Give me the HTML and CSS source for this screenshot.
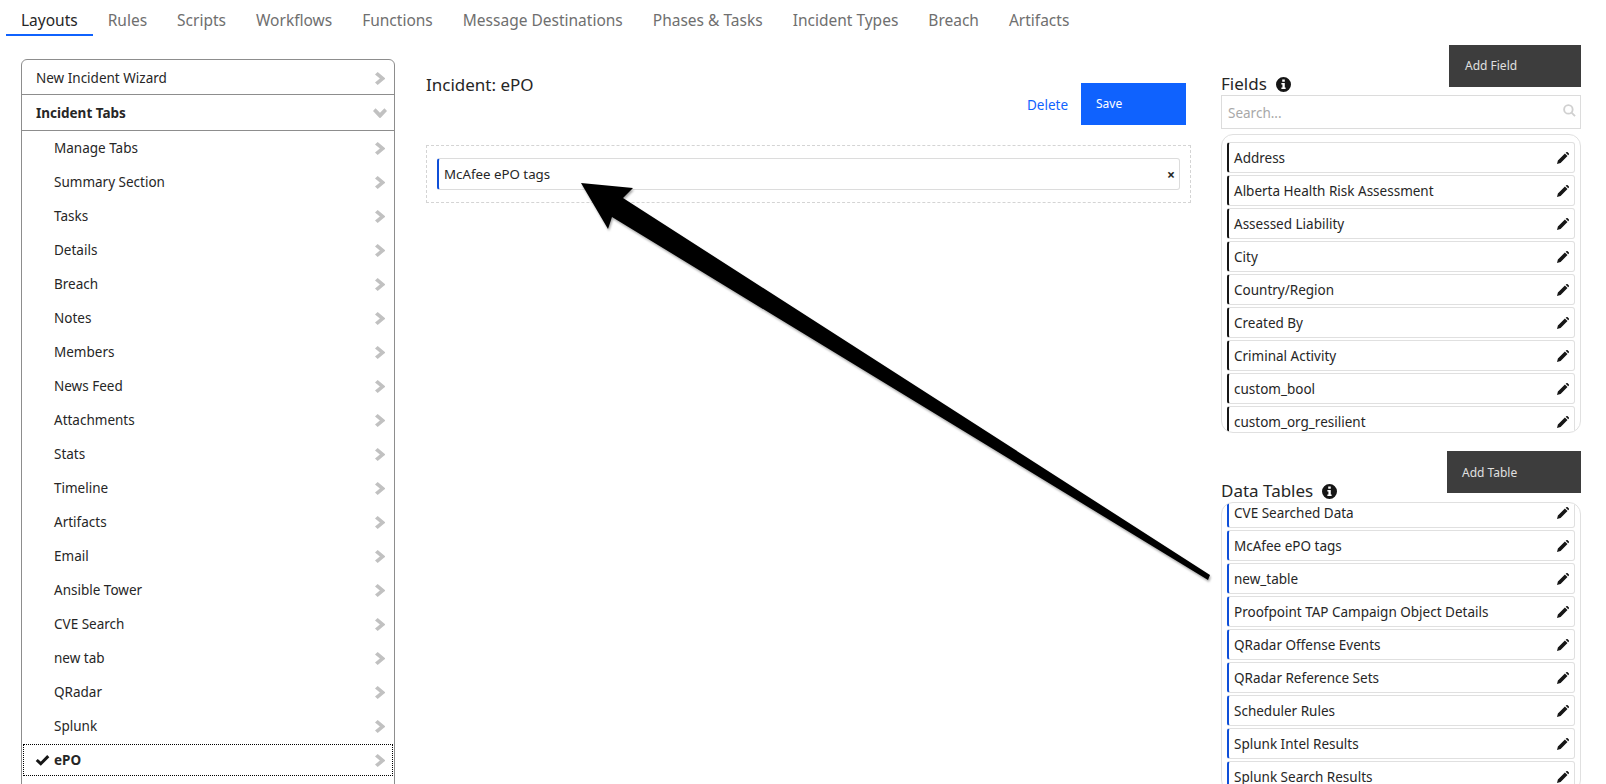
FILE: index.html
```html
<!DOCTYPE html>
<html lang="en">
<head>
  <meta charset="UTF-8">
  <meta name="viewport" content="width=device-width, initial-scale=1.0">
  <title>Customization Settings</title>
  <link rel="stylesheet" href="styles.css">
</head>
<body>
  <svg class="defs" width="0" height="0">
    <symbol id="i-right" viewBox="0 0 9 12" preserveAspectRatio="none"><path d="M2.4 0 8.6 5.2a1 1 0 0 1 0 1.6L2.4 12 0 9.8 4.4 6 0 2.2Z"/></symbol>
    <symbol id="i-down" viewBox="0 0 12 8"><path d="M0 2.2 5.2 7.8a1 1 0 0 0 1.6 0L12 2.2 9.8 0 6 3.8 2.2 0Z"/></symbol>
    <symbol id="i-pencil" viewBox="0 0 12 12"><path d="M0 12 .9 8.4 7.9 1.5 10.5 4.1 3.6 11.1ZM8.7.8 9.3.3a1 1 0 0 1 1.4 0l1 1a1 1 0 0 1 0 1.4l-.5.6Z"/></symbol>
    <symbol id="i-info" viewBox="0 0 14 14"><path fill-rule="evenodd" d="M7 0a7 7 0 1 1 0 14A7 7 0 0 1 7 0ZM5.8 2.4v2.1h2.4V2.4ZM5 5.7v1.4h1v2.6H5v1.6h4V9.7H8.2V5.7Z"/></symbol>
  </svg>

  <nav class="tabs">
    <a class="tab active">Layouts</a>
    <a class="tab">Rules</a>
    <a class="tab">Scripts</a>
    <a class="tab">Workflows</a>
    <a class="tab">Functions</a>
    <a class="tab">Message Destinations</a>
    <a class="tab">Phases &amp; Tasks</a>
    <a class="tab">Incident Types</a>
    <a class="tab">Breach</a>
    <a class="tab">Artifacts</a>
  </nav>

  <main class="page">
    <aside class="menu">
      <div class="menu-head first">New Incident Wizard <svg class="chev"><use href="#i-right"/></svg></div>
      <div class="menu-head open"><b>Incident Tabs</b> <svg class="chev-down"><use href="#i-down"/></svg></div>
      <div class="menu-item">Manage Tabs <svg class="chev"><use href="#i-right"/></svg></div>
      <div class="menu-item">Summary Section <svg class="chev"><use href="#i-right"/></svg></div>
      <div class="menu-item">Tasks <svg class="chev"><use href="#i-right"/></svg></div>
      <div class="menu-item">Details <svg class="chev"><use href="#i-right"/></svg></div>
      <div class="menu-item">Breach <svg class="chev"><use href="#i-right"/></svg></div>
      <div class="menu-item">Notes <svg class="chev"><use href="#i-right"/></svg></div>
      <div class="menu-item">Members <svg class="chev"><use href="#i-right"/></svg></div>
      <div class="menu-item">News Feed <svg class="chev"><use href="#i-right"/></svg></div>
      <div class="menu-item">Attachments <svg class="chev"><use href="#i-right"/></svg></div>
      <div class="menu-item">Stats <svg class="chev"><use href="#i-right"/></svg></div>
      <div class="menu-item">Timeline <svg class="chev"><use href="#i-right"/></svg></div>
      <div class="menu-item">Artifacts <svg class="chev"><use href="#i-right"/></svg></div>
      <div class="menu-item">Email <svg class="chev"><use href="#i-right"/></svg></div>
      <div class="menu-item">Ansible Tower <svg class="chev"><use href="#i-right"/></svg></div>
      <div class="menu-item">CVE Search <svg class="chev"><use href="#i-right"/></svg></div>
      <div class="menu-item">new tab <svg class="chev"><use href="#i-right"/></svg></div>
      <div class="menu-item">QRadar <svg class="chev"><use href="#i-right"/></svg></div>
      <div class="menu-item">Splunk <svg class="chev"><use href="#i-right"/></svg></div>
      <div class="menu-item selected">
        <svg class="check" viewBox="0 0 13 10"><path d="M1.5 5 5 8.2 11.5 1.6"/></svg>
        <b>ePO</b> <svg class="chev"><use href="#i-right"/></svg>
      </div>
    </aside>

    <section class="editor">
      <div class="editor-head">
        <h2 class="editor-title">Incident: ePO</h2>
        <div class="editor-actions">
          <a class="link-delete">Delete</a>
          <button class="btn-save">Save</button>
        </div>
      </div>
      <div class="dropzone">
        <div class="block">McAfee ePO tags <span class="block-close">×</span></div>
      </div>
    </section>

    <aside class="side">
      <div class="side-head">
        <h3 class="side-title">Fields <svg class="info"><use href="#i-info"/></svg></h3>
        <button class="btn-add">Add Field</button>
      </div>
      <div class="search">
        <span>Search...</span>
        <svg class="search-icon" viewBox="0 0 14 14"><circle cx="5.8" cy="5.8" r="4.6"/><path d="M9.2 9.2 13 13"/></svg>
      </div>
      <div class="rows fields">
        <div class="row">Address <svg class="pencil"><use href="#i-pencil"/></svg></div>
        <div class="row">Alberta Health Risk Assessment <svg class="pencil"><use href="#i-pencil"/></svg></div>
        <div class="row">Assessed Liability <svg class="pencil"><use href="#i-pencil"/></svg></div>
        <div class="row">City <svg class="pencil"><use href="#i-pencil"/></svg></div>
        <div class="row">Country/Region <svg class="pencil"><use href="#i-pencil"/></svg></div>
        <div class="row">Created By <svg class="pencil"><use href="#i-pencil"/></svg></div>
        <div class="row">Criminal Activity <svg class="pencil"><use href="#i-pencil"/></svg></div>
        <div class="row">custom_bool <svg class="pencil"><use href="#i-pencil"/></svg></div>
        <div class="row">custom_org_resilient <svg class="pencil"><use href="#i-pencil"/></svg></div>
      </div>

      <div class="side-head tables-head">
        <h3 class="side-title">Data Tables <svg class="info"><use href="#i-info"/></svg></h3>
        <button class="btn-add wide">Add Table</button>
      </div>
      <div class="rows tables">
        <div class="row">CVE Searched Data <svg class="pencil"><use href="#i-pencil"/></svg></div>
        <div class="row">McAfee ePO tags <svg class="pencil"><use href="#i-pencil"/></svg></div>
        <div class="row">new_table <svg class="pencil"><use href="#i-pencil"/></svg></div>
        <div class="row">Proofpoint TAP Campaign Object Details <svg class="pencil"><use href="#i-pencil"/></svg></div>
        <div class="row">QRadar Offense Events <svg class="pencil"><use href="#i-pencil"/></svg></div>
        <div class="row">QRadar Reference Sets <svg class="pencil"><use href="#i-pencil"/></svg></div>
        <div class="row">Scheduler Rules <svg class="pencil"><use href="#i-pencil"/></svg></div>
        <div class="row">Splunk Intel Results <svg class="pencil"><use href="#i-pencil"/></svg></div>
        <div class="row">Splunk Search Results <svg class="pencil"><use href="#i-pencil"/></svg></div>
      </div>
    </aside>
  </main>

  <!-- annotation drawn on top of the screenshot -->
  <svg class="arrow" viewBox="0 0 1606 784">
    <path d="M581 183 633 188 623 198 1210 575 1208 580 612 217 608 229Z"/>
  </svg>
</body>
</html>
```

FILE: styles.css
```css
html, body {
  height: 784px;
}

body {
  font-family: 'Noto Sans', sans-serif;
  font-size: 13.5px;
  color: #262626;
  background-color: #fff;
  margin: 0;
  overflow: hidden;
  position: relative;
}

.defs {
  position: absolute;
}

/* top tabs */
.tabs {
  display: flex;
  height: 36px;
  margin-left: 6px;
}

.tab {
  padding: 10px 15px 0;
  font-size: 15.5px;
  line-height: 20px;
  color: #6f6f6f;
  box-sizing: border-box;
  white-space: nowrap;
}

.tab.active {
  color: #262626;
  border-bottom: 2px solid #0f62fe;
}

.page {
  display: flex;
  align-items: flex-start;
  height: 748px;
  padding-left: 21px;
}

/* left menu */
.menu {
  width: 374px;
  height: 760px;
  margin-top: 23px;
  box-sizing: border-box;
  border: 1px solid #8d8d8d;
  border-radius: 6px;
  flex-shrink: 0;
}

.menu-head {
  display: flex;
  align-items: center;
  justify-content: space-between;
  height: 35px;
  padding: 0 9px 0 14px;
  box-sizing: border-box;
  border-bottom: 1px solid #8d8d8d;
}

.menu-head.first {
  padding-top: 2px;
}

.menu-head.open {
  height: 36px;
}

.menu-item {
  display: flex;
  align-items: center;
  justify-content: space-between;
  height: 34px;
  padding: 0 9px 0 32px;
  box-sizing: border-box;
  position: relative;
}

.menu-item.selected {
  outline: 1px dotted #000;
  outline-offset: -2px;
}

.chev {
  width: 10px;
  height: 13px;
  fill: #c1c1c1;
}

.chev-down {
  width: 14px;
  height: 10px;
  fill: #c1c1c1;
  margin-right: -2px;
}

.check {
  position: absolute;
  left: 13px;
  top: 11px;
  width: 15px;
  height: 12px;
  fill: none;
  stroke: #161616;
  stroke-width: 2.6;
}

/* middle */
.editor {
  width: 765px;
  margin-left: 31px;
  margin-top: 37px;
  flex-shrink: 0;
}

.editor-head {
  display: flex;
  justify-content: space-between;
  padding-right: 5px;
  height: 52px;
}

.editor-title {
  margin: 0;
  font-size: 17px;
  font-weight: 400;
  line-height: 24px;
}

.editor-actions {
  display: flex;
  align-items: center;
  gap: 13px;
  margin-top: 10px;
  height: 42px;
}

.link-delete {
  color: #0f62fe;
  margin-top: 1px;
}

.btn-save {
  width: 105px;
  height: 42px;
  padding: 0 0 2px 15px;
  border: none;
  background-color: #0f62fe;
  color: #fff;
  font-family: inherit;
  font-size: 12px;
  text-align: left;
}

.dropzone {
  margin-top: 20px;
  padding: 12px 10px;
  border: 1px dashed #d4d4d4;
}

.block {
  display: flex;
  align-items: center;
  justify-content: space-between;
  height: 32px;
  padding: 0 4px 0 5px;
  font-size: 13.3px;
  box-sizing: border-box;
  border: 1px solid #dcdcdc;
  border-left: 2px solid #0f4fd8;
  border-radius: 3px;
}

.block-close {
  font-weight: 700;
  font-size: 14px;
}

/* right column */
.side {
  width: 360px;
  margin-left: 30px;
  margin-top: 9px;
  flex-shrink: 0;
}

.side-head {
  display: flex;
  justify-content: space-between;
  height: 50px;
}

.tables-head {
  margin-top: 18px;
  height: 51px;
}

.side-title {
  margin: 0;
  align-self: flex-end;
  display: flex;
  align-items: center;
  gap: 9px;
  font-size: 17px;
  font-weight: 400;
  line-height: 22px;
}

.info {
  width: 15px;
  height: 15px;
  fill: #161616;
}

.btn-add {
  width: 132px;
  height: 42px;
  padding: 0 0 1px 16px;
  border: none;
  background-color: #3d3d3d;
  color: #e0e0e0;
  font-family: inherit;
  font-size: 12px;
  text-align: left;
}

.btn-add.wide {
  width: 134px;
  padding: 0 0 0 15px;
}

.search {
  display: flex;
  align-items: center;
  justify-content: space-between;
  height: 34px;
  padding: 1px 4px 0 6px;
  box-sizing: border-box;
  border: 1px solid #dcdcdc;
  color: #a8a8a8;
}

.search-icon {
  width: 13px;
  height: 13px;
  fill: none;
  stroke: #d0d0d0;
  stroke-width: 2;
  margin-bottom: 4px;
}

.rows {
  box-sizing: border-box;
  padding: 0 5px;
  border: 1px solid #e0e0e0;
  border-radius: 12px;
  overflow: hidden;
}

.rows.fields {
  height: 299px;
  margin-top: 5px;
  padding-top: 7px;
}

.rows.tables {
  height: 290px;
}

.rows.tables .row:first-child {
  margin-top: -6px;
}

.row {
  display: flex;
  align-items: center;
  justify-content: space-between;
  height: 31px;
  margin-bottom: 2px;
  padding: 0 5px 0 5px;
  box-sizing: border-box;
  border: 1px solid #e0e0e0;
  border-left: 2px solid #161616;
  border-radius: 3px;
}

.tables .row {
  border-left-color: #0f4fd8;
}

.pencil {
  width: 12px;
  height: 12px;
  fill: #161616;
}

/* arrow annotation */
.arrow {
  position: absolute;
  left: 0;
  top: 0;
  width: 1606px;
  height: 784px;
  pointer-events: none;
  filter: drop-shadow(1px 2px 1px rgba(0, 0, 0, 0.35));
}
```
